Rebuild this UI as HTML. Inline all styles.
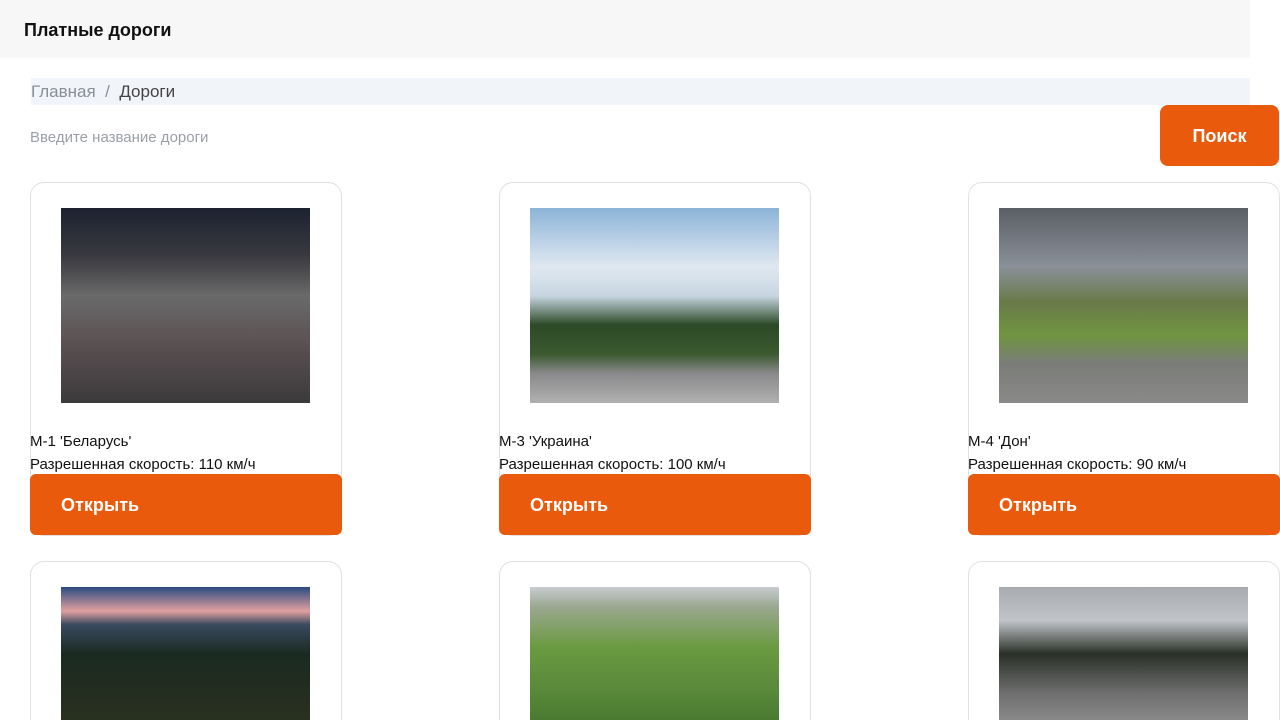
<!DOCTYPE html>
<html style="width:1280px;height:720px;overflow:hidden"><head><meta charset="utf-8"><style>
*{margin:0;padding:0;box-sizing:border-box}
body{width:1280px;height:720px;overflow:hidden;background:#fff;font-family:"Liberation Sans","DejaVu Sans",sans-serif;position:relative}
.hdr{position:absolute;left:0;top:0;width:1250px;height:58px;background:#f7f7f7}
.hdr span{position:absolute;left:24px;top:20px;font-size:18px;font-weight:bold;color:#111}
.bc{position:absolute;left:31px;top:78px;width:1219px;height:27px;background:#f1f4f9;font-size:17px;line-height:27px;color:#8a8f96}
.bc b{font-weight:normal;color:#444}
.ph{position:absolute;left:30px;top:129px;font-size:15px;color:#9aa0a6}
.sb{position:absolute;left:1160px;top:105px;width:119px;height:61px;background:#e95a0c;border-radius:8px;color:#fff;font-weight:bold;font-size:18px;text-align:center;line-height:63px}
.card{position:absolute;width:312px;border:1px solid #e0e0e0;border-radius:14px;background:#fff}
.card .img{position:absolute;left:30px;top:25px;width:249px;height:195px}
.card.b{height:159px;border-bottom:none;border-radius:14px 14px 0 0;overflow:hidden}
.card.b .img{height:134px}
.t{position:absolute;left:-1px;font-size:15px;color:#111;white-space:nowrap}
.btn{position:absolute;left:-1px;top:291px;width:312px;height:61px;background:#e95a0c;border-radius:6px;color:#fff;font-weight:bold;font-size:18px;line-height:63px;padding-left:31px}
</style></head><body>
<div class="hdr"><span>Платные дороги</span></div>
<div class="bc">Главная &nbsp;/&nbsp; <b>Дороги</b></div>
<div class="ph">Введите название дороги</div>
<div class="sb">Поиск</div>

<div class="card" style="left:30px;top:182px;height:354px">
<div class="img" style="background:linear-gradient(180deg,#1c2230 0%,#3a3a40 25%,#6a6a6a 45%,#5a5052 70%,#3c3a3c 100%)"></div>
<div class="t" style="top:250px">М-1 'Беларусь'</div>
<div class="t" style="top:273px">Разрешенная скорость: 110 км/ч</div>
<div class="btn">Открыть</div></div>

<div class="card" style="left:499px;top:182px;height:354px">
<div class="img" style="background:linear-gradient(180deg,#8cb4d8 0%,#dfe8f0 30%,#c8d6e2 45%,#2b4a26 60%,#3c5a30 75%,#8a8a8c 85%,#b0b0b0 100%)"></div>
<div class="t" style="top:250px">М-3 'Украина'</div>
<div class="t" style="top:273px">Разрешенная скорость: 100 км/ч</div>
<div class="btn">Открыть</div></div>

<div class="card" style="left:968px;top:182px;height:354px">
<div class="img" style="background:linear-gradient(180deg,#5a5f66 0%,#8a9098 30%,#6a7a4a 48%,#6f9440 65%,#7a7c78 80%,#8a8a88 100%)"></div>
<div class="t" style="top:250px">М-4 'Дон'</div>
<div class="t" style="top:273px">Разрешенная скорость: 90 км/ч</div>
<div class="btn">Открыть</div></div>

<div class="card b" style="left:30px;top:561px">
<div class="img" style="background:linear-gradient(180deg,#2a4a80 0%,#e0a0a0 18%,#3a4a60 28%,#1a2a20 50%,#2a3020 100%)"></div></div>
<div class="card b" style="left:499px;top:561px">
<div class="img" style="background:linear-gradient(180deg,#c8ccd0 0%,#9aa890 15%,#6a9a40 45%,#5a8a3a 75%,#4a7a30 100%)"></div></div>
<div class="card b" style="left:968px;top:561px">
<div class="img" style="background:linear-gradient(180deg,#a8acb0 0%,#c0c4c8 25%,#2a3028 50%,#707070 80%,#8a8a8a 100%)"></div></div>
</body></html>
